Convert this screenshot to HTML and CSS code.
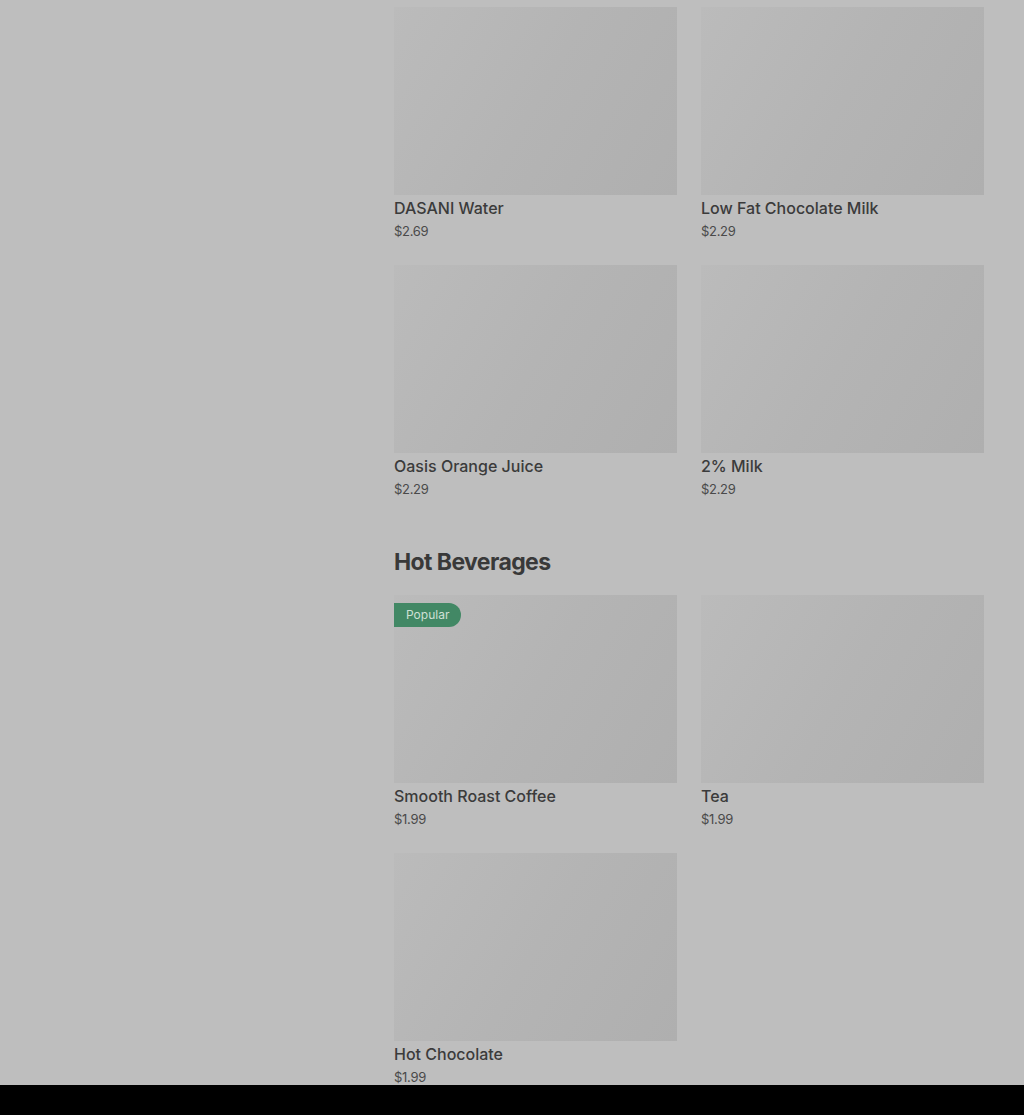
FILE: index.html
```html
<!DOCTYPE html>
<html>
<head>
  <title>Menu</title>
  <link rel="stylesheet" href="styles.css">
</head>
<body>
  <main class="menu">
    <section class="section first">
      <div class="grid">
        <div class="item">
          <div class="thumb"></div>
          <div class="name">DASANI Water</div>
          <div class="price">$2.69</div>
        </div>
        <div class="item">
          <div class="thumb"></div>
          <div class="name">Low Fat Chocolate Milk</div>
          <div class="price">$2.29</div>
        </div>
        <div class="item">
          <div class="thumb"></div>
          <div class="name">Oasis Orange Juice</div>
          <div class="price">$2.29</div>
        </div>
        <div class="item">
          <div class="thumb"></div>
          <div class="name">2% Milk</div>
          <div class="price">$2.29</div>
        </div>
      </div>
    </section>

    <section class="section">
      <h2>Hot Beverages</h2>
      <div class="grid">
        <div class="item">
          <div class="thumb"><span class="badge">Popular</span></div>
          <div class="name">Smooth Roast Coffee</div>
          <div class="price">$1.99</div>
        </div>
        <div class="item">
          <div class="thumb"></div>
          <div class="name">Tea</div>
          <div class="price">$1.99</div>
        </div>
        <div class="item">
          <div class="thumb"></div>
          <div class="name">Hot Chocolate</div>
          <div class="price">$1.99</div>
        </div>
      </div>
    </section>
  </main>
  <div class="bottom-bar"></div>
</body>
</html>
```

FILE: styles.css
```css
body {
  margin: 0;
  background-color: #bebebe;
  color: #3a3a3a;
  font-family: Inter, 'Noto Sans', Arial, sans-serif;
}
.menu {
  padding: 7px 40px 0 394px;
}
.section {
  margin-top: 47px;
}
.section.first {
  margin-top: 0;
}
h2 {
  margin: 0 0 17px;
  font-size: 23px;
  line-height: 32px;
  font-weight: 700;
  letter-spacing: -0.6px;
  color: #393939;
}
.grid {
  display: grid;
  grid-template-columns: 283px 283px;
  column-gap: 24px;
  row-gap: 24px;
}
.thumb {
  position: relative;
  height: 188px;
  background: linear-gradient(120deg, #bbbbbb 0%, #b4b4b4 50%, #afafaf 100%);
}
.badge {
  position: absolute;
  top: 8px;
  left: 0;
  height: 24px;
  padding: 0 12px;
  line-height: 24px;
  font-size: 12px;
  color: #cfe0d5;
  background-color: #428865;
  border-radius: 0 12px 12px 0;
}
.name {
  margin-top: 3px;
  font-size: 16px;
  line-height: 20px;
  font-weight: 500;
  color: #3b3b3b;
}
.price {
  margin-top: 3px;
  font-size: 13px;
  line-height: 20px;
  letter-spacing: -0.3px;
  color: #4a4a4a;
}
.bottom-bar {
  position: fixed;
  left: 0;
  right: 0;
  bottom: 0;
  height: 30px;
  background-color: #000;
}
```
